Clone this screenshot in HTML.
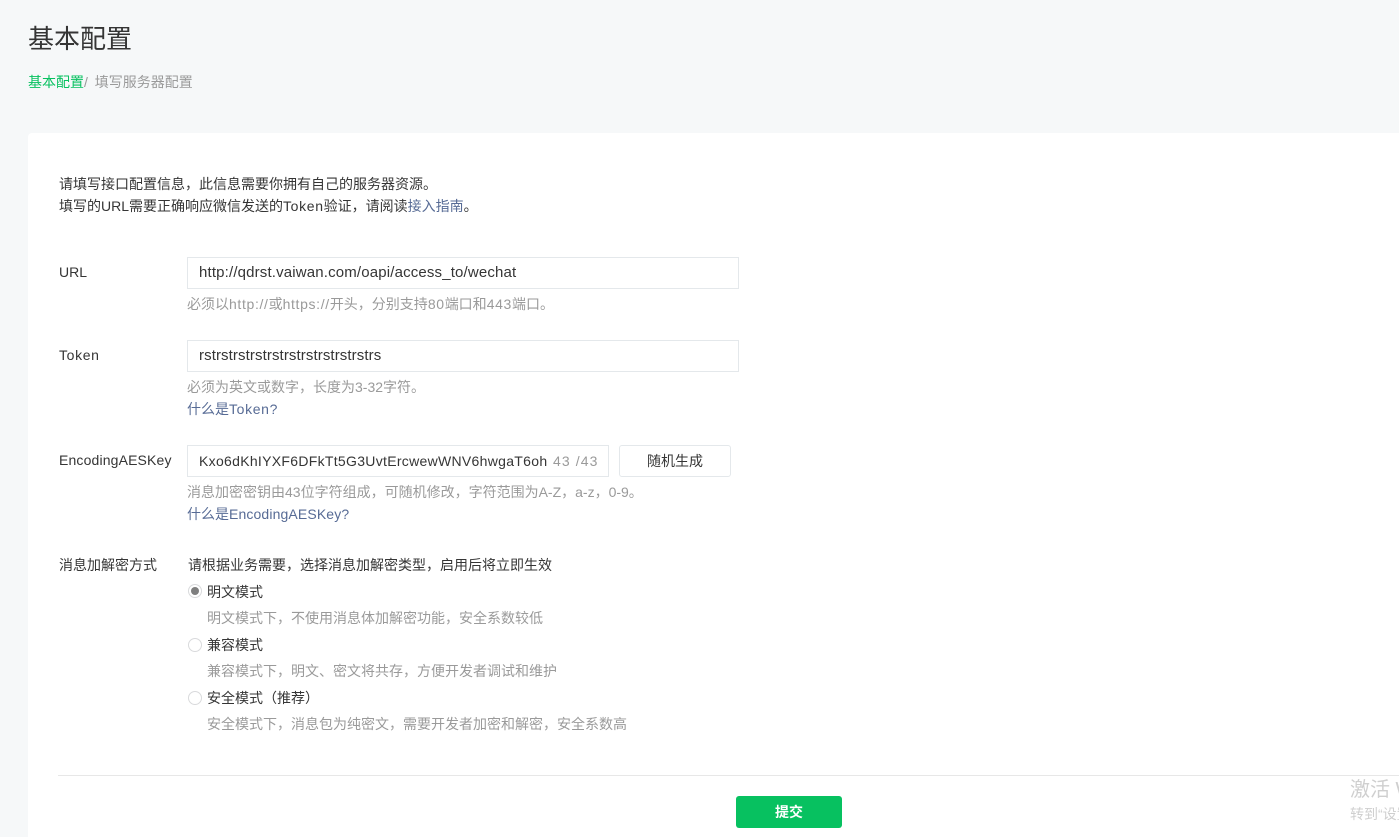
<!DOCTYPE html>
<html lang="zh-CN">
<head>
<meta charset="utf-8">
<title>基本配置</title>
<style>
html,body{margin:0;padding:0;width:1399px;height:837px;overflow:hidden;background:#f6f8f9;}
body{position:relative;font-family:"Liberation Sans","Noto Sans CJK SC",sans-serif;font-size:14px;color:#353535;}
.a{position:absolute;white-space:nowrap;line-height:20px;}
.card{position:absolute;left:28px;top:133px;width:1371px;height:704px;background:#fff;border-radius:4px 0 0 0;}
.tip{color:#9a9a9a;}
.lk{color:#576b95;}
.l{letter-spacing:.65px;}
.inp{position:absolute;box-sizing:border-box;height:32px;background:#fff;border:1px solid #e4e8eb;}
.btn{position:absolute;box-sizing:border-box;border-radius:3px;text-align:center;}
.radio{position:absolute;box-sizing:border-box;width:14px;height:14px;border:1px solid #d9dadc;border-radius:50%;background:#fff;}
.radio i{position:absolute;left:2px;top:2px;width:8px;height:8px;border-radius:50%;background:#7f7f7f;}
</style>
</head>
<body>
<div class="a" style="left:28px;top:21px;font-size:26px;line-height:36px;">基本配置</div>
<div class="a" style="left:28px;top:72px;color:#07c160;">基本配置<span style="color:#9a9a9a;"><span style="letter-spacing:1.5px;">/ </span>填写服务器配置</span></div>
<div class="card"></div>

<div class="a" style="left:59px;top:174px;">请填写接口配置信息，此信息需要你拥有自己的服务器资源。</div>
<div class="a" style="left:59px;top:196px;">填写的URL需要正确响应微信发送的<span class="l">Token</span>验证，请阅读<span class="lk">接入指南</span>。</div>

<div class="a" style="left:59px;top:262px;">URL</div>
<div class="inp" style="left:187px;top:257px;width:552px;"></div>
<div class="a" style="left:199px;top:263px;font-size:15px;letter-spacing:.16px;">http://qdrst.vaiwan.com/oapi/access_to/wechat</div>
<div class="a tip" style="left:187px;top:294px;">必须以<span class="l">http://</span>或<span class="l">https://</span>开头，分别支持<span class="l">80</span>端口和<span class="l">443</span>端口。</div>

<div class="a l" style="left:59px;top:345px;">Token</div>
<div class="inp" style="left:187px;top:340px;width:552px;"></div>
<div class="a" style="left:199px;top:346px;font-size:15px;letter-spacing:.1px;">rstrstrstrstrstrstrstrstrstrstrs</div>
<div class="a tip" style="left:187px;top:377px;">必须为英文或数字，长度为3-32字符。</div>
<div class="a lk" style="left:187px;top:399px;">什么是<span class="l">Token?</span></div>

<div class="a" style="left:59px;top:450px;letter-spacing:.15px;">EncodingAESKey</div>
<div class="inp" style="left:187px;top:445px;width:422px;"></div>
<div class="a" style="left:199px;top:451px;letter-spacing:.3px;">Kxo6dKhIYXF6DFkTt5G3UvtErcwewWNV6hwgaT6oh</div>
<div class="a tip" style="left:553px;top:451px;letter-spacing:1.1px;">43 /43</div>
<div class="btn" style="left:619px;top:445px;width:112px;height:32px;border:1px solid #e4e8eb;line-height:30px;">随机生成</div>
<div class="a tip" style="left:187px;top:482px;">消息加密密钥由43位字符组成，可随机修改，字符范围为A-Z，a-z，0-9。</div>
<div class="a lk" style="left:187px;top:504px;">什么是<span style="letter-spacing:.13px;">EncodingAESKey?</span></div>

<div class="a" style="left:59px;top:555px;">消息加解密方式</div>
<div class="a" style="left:188px;top:555px;">请根据业务需要，选择消息加解密类型，启用后将立即生效</div>

<div class="radio" style="left:188px;top:584px;"><i></i></div>
<div class="a" style="left:207px;top:582px;">明文模式</div>
<div class="a tip" style="left:207px;top:608px;">明文模式下，不使用消息体加解密功能，安全系数较低</div>

<div class="radio" style="left:188px;top:638px;"></div>
<div class="a" style="left:207px;top:635px;">兼容模式</div>
<div class="a tip" style="left:207px;top:661px;">兼容模式下，明文、密文将共存，方便开发者调试和维护</div>

<div class="radio" style="left:188px;top:691px;"></div>
<div class="a" style="left:207px;top:688px;">安全模式（推荐）</div>
<div class="a tip" style="left:207px;top:714px;">安全模式下，消息包为纯密文，需要开发者加密和解密，安全系数高</div>

<div style="position:absolute;left:58px;top:775px;width:1341px;height:1px;background:#e7e7e7;"></div>
<div class="btn" style="left:736px;top:796px;width:106px;height:32px;background:#07c160;color:#fff;font-weight:700;line-height:32px;">提交</div>

<div style="position:absolute;left:1350px;top:777px;width:49px;height:50px;overflow:hidden;color:#cfcfcf;">
<div class="a" style="left:0;top:0;font-size:20px;line-height:26px;">激活 W</div>
<div class="a" style="left:0;top:27px;">转到“设置”</div>
</div>
</body>
</html>
